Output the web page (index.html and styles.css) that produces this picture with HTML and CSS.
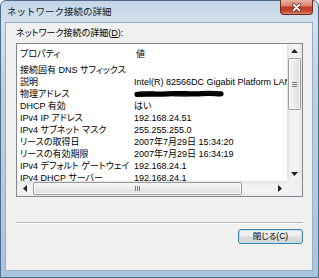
FILE: index.html
```html
<!DOCTYPE html>
<html lang="ja">
<head>
<meta charset="utf-8">
<title>ネットワーク接続の詳細</title>
<link rel="stylesheet" href="styles.css">
</head>
<body>
<div class="window">
  <div class="titlebar">
    <span class="title">ネットワーク接続の詳細</span>
    <div class="close">
      <svg width="31" height="13" viewBox="0 0 31 13">
        <path d="M12.5 3.5 L18.5 9.5 M18.5 3.5 L12.5 9.5" stroke="#5a1a10" stroke-width="3.2" stroke-linecap="round"/>
        <path d="M12.5 3.5 L18.5 9.5 M18.5 3.5 L12.5 9.5" stroke="#ffffff" stroke-width="1.8" stroke-linecap="round"/>
      </svg>
    </div>
  </div>
  <div class="client">
    <div class="label">ネットワーク接続の詳細(<u>D</u>):</div>
    <div class="listbox">
      <div class="view">
        <div class="row header"><span class="c1">プロパティ</span><span class="c2">値</span></div>
        <div class="row"><span class="c1">接続固有 DNS サフィックス</span><span class="c2"></span></div>
        <div class="row"><span class="c1">説明</span><span class="c2">Intel(R) 82566DC Gigabit Platform LAN Connect</span></div>
        <div class="row"><span class="c1">物理アドレス</span><span class="c2">
          <svg class="redact" width="92" height="12" viewBox="0 0 92 12">
            <path d="M3 6.4 C 12 5.4, 22 6.8, 34 5.8 S 56 6.6, 68 5.6 S 82 6.4, 87 5.8" stroke="#000" stroke-width="5.2" stroke-linecap="round" fill="none"/>
            <path d="M6 4.4 L 20 4 M 40 7.8 L 54 7.6 M 70 4.2 L 84 4" stroke="#111" stroke-width="1.6" stroke-linecap="round"/>
          </svg></span></div>
        <div class="row"><span class="c1">DHCP 有効</span><span class="c2">はい</span></div>
        <div class="row"><span class="c1">IPv4 IP アドレス</span><span class="c2">192.168.24.51</span></div>
        <div class="row"><span class="c1">IPv4 サブネット マスク</span><span class="c2">255.255.255.0</span></div>
        <div class="row"><span class="c1">リースの取得日</span><span class="c2">2007年7月29日 15:34:20</span></div>
        <div class="row"><span class="c1">リースの有効期限</span><span class="c2">2007年7月29日 16:34:19</span></div>
        <div class="row"><span class="c1">IPv4 デフォルト ゲートウェイ</span><span class="c2">192.168.24.1</span></div>
        <div class="row"><span class="c1">IPv4 DHCP サーバー</span><span class="c2">192.168.24.1</span></div>
      </div>
      <div class="vscroll">
        <div class="sbtn"><svg width="7" height="4" viewBox="0 0 7 4"><path d="M0 4 L3.5 0 L7 4 Z" fill="#222"/></svg></div>
        <div class="vtrack"><div class="vthumb"><svg width="5" height="5" viewBox="0 0 5 5"><path d="M0 0.5 H5 M0 2.5 H5 M0 4.5 H5" stroke="#7a7a7a" stroke-width="1"/></svg></div></div>
        <div class="sbtn"><svg width="7" height="4" viewBox="0 0 7 4"><path d="M0 0 L3.5 4 L7 0 Z" fill="#222"/></svg></div>
      </div>
      <div class="hscroll">
        <div class="sbtn"><svg width="4" height="7" viewBox="0 0 4 7"><path d="M4 0 L0 3.5 L4 7 Z" fill="#222"/></svg></div>
        <div class="htrack"><div class="hthumb"><svg width="5" height="5" viewBox="0 0 5 5"><path d="M0.5 0 V5 M2.5 0 V5 M4.5 0 V5" stroke="#7a7a7a" stroke-width="1"/></svg></div></div>
        <div class="sbtn"><svg width="4" height="7" viewBox="0 0 4 7"><path d="M0 0 L4 3.5 L0 7 Z" fill="#222"/></svg></div>
      </div>
      <div class="corner"></div>
    </div>
    <div class="sep"></div>
    <div class="buttons"><button class="btn">閉じる(C)</button></div>
  </div>
</div>
</body>
</html>
```
FILE: styles.css
```css
* { box-sizing: border-box; }
html, body { margin: 0; padding: 0; }
body {
  width: 319px;
  height: 278px;
  overflow: hidden;
  background: #ffffff;
  font-family: "Liberation Sans", "Noto Sans CJK JP", sans-serif;
  font-size: 9px;
  font-feature-settings: "palt";
  color: #000;
}
.window {
  width: 319px;
  height: 278px;
  display: flex;
  flex-direction: column;
  padding: 0 5px 6px 4px;
  border: 1px solid #4f6d8a;
  border-radius: 6px 6px 0 0;
  background: linear-gradient(180deg, #c3d5e6 0px, #d3e1ed 21px, #bcd1e4 90px, #a9c5de 278px);
}
.titlebar {
  height: 21px;
  display: flex;
  align-items: flex-start;
}
.title {
  margin: 4px 0 0 2px;
  font-size: 9.5px;
  line-height: 12px;
  color: #0c1a28;
  font-family: "Noto Sans CJK JP", sans-serif;
  font-feature-settings: normal;
}
.close {
  margin-left: auto;
  margin-top: -1px;
  width: 33px;
  height: 15px;
  border: 1px solid #6d2a1e;
  border-top: none;
  border-radius: 0 0 4px 4px;
  background: linear-gradient(180deg, #eab0a2 0%, #d98370 42%, #bd3b22 50%, #c8472c 80%, #e3876a 100%);
  display: flex;
  align-items: center;
  justify-content: center;
}
.close svg { display: block; }
.client {
  flex: 1;
  background: #f0f0f0;
  border: 1px solid #98adc2;
  padding: 4px 9px 0 10px;
  display: flex;
  flex-direction: column;
}
.label {
  line-height: 12px;
  height: 12px;
  white-space: nowrap;
}
.listbox {
  margin-top: 4px;
  height: 154px;
  border: 1px solid #828790;
  background: #ffffff;
  display: grid;
  grid-template-columns: 1fr 15px;
  grid-template-rows: 1fr 15px;
}
.view {
  overflow: hidden;
  min-width: 0;
}
.row {
  display: flex;
  height: 12px;
  line-height: 12px;
  white-space: nowrap;
}
.row.header {
  height: 20px;
  line-height: 20px;
}
.c1 {
  flex: 0 0 116px;
  padding-left: 3px;
  overflow: hidden;
}
.c2 {
  padding-left: 1px;
  display: flex;
  align-items: center;
}
.header .c2 { padding-left: 3px; }
.redact { display: block; }
.vscroll {
  display: flex;
  flex-direction: column;
  background: linear-gradient(90deg, #e2e2e2 0, #f1f1f1 25%, #f3f3f3 75%, #e6e6e6 100%);
}
.hscroll {
  display: flex;
  background: linear-gradient(180deg, #e2e2e2 0, #f1f1f1 25%, #f3f3f3 75%, #e6e6e6 100%);
}
.sbtn {
  flex: 0 0 14px;
  display: flex;
  align-items: center;
  justify-content: center;
}
.vscroll .sbtn:last-child { flex-basis: 15px; }
.hscroll .sbtn { flex: 0 0 15px; }
.sbtn svg { display: block; }
.vtrack { flex: 1; padding: 0 1px; }
.vthumb {
  height: 52px;
  border: 1px solid #9b9b9b;
  border-radius: 2px;
  background: linear-gradient(90deg, #f6f6f6 0, #ececec 50%, #dadada 100%);
  box-shadow: inset 0 0 0 1px #fafafa;
  display: flex;
  align-items: center;
  justify-content: center;
}
.htrack { flex: 1; padding: 1px 0 1px 1px; }
.hthumb {
  width: 209px;
  height: 100%;
  border: 1px solid #9b9b9b;
  border-radius: 2px;
  background: linear-gradient(180deg, #f6f6f6 0, #ececec 50%, #d8d8d8 100%);
  box-shadow: inset 0 0 0 1px #fafafa;
  display: flex;
  align-items: center;
  justify-content: center;
}
.vthumb svg, .hthumb svg { display: block; }
.corner { background: #f0f0f0; }
.sep {
  margin-top: 25px;
  height: 2px;
  border-top: 1px solid #b9b9b9;
  border-bottom: 1px solid #ffffff;
}
.buttons {
  margin-top: 5px;
  display: flex;
  justify-content: flex-end;
}
.btn {
  width: 65px;
  height: 15px;
  padding: 0;
  margin: 0;
  font-family: "Liberation Sans", "Noto Sans CJK JP", sans-serif;
  font-size: 8.5px;
  font-feature-settings: "palt";
  line-height: 13px;
  color: #000;
  border: 1px solid #3c7fb1;
  border-radius: 3px;
  background: linear-gradient(180deg, #f4f4f4 0%, #ececec 48%, #dcdcdc 52%, #d0d0d0 100%);
  box-shadow: inset 0 0 0 1px #bfe4f8;
}
```
